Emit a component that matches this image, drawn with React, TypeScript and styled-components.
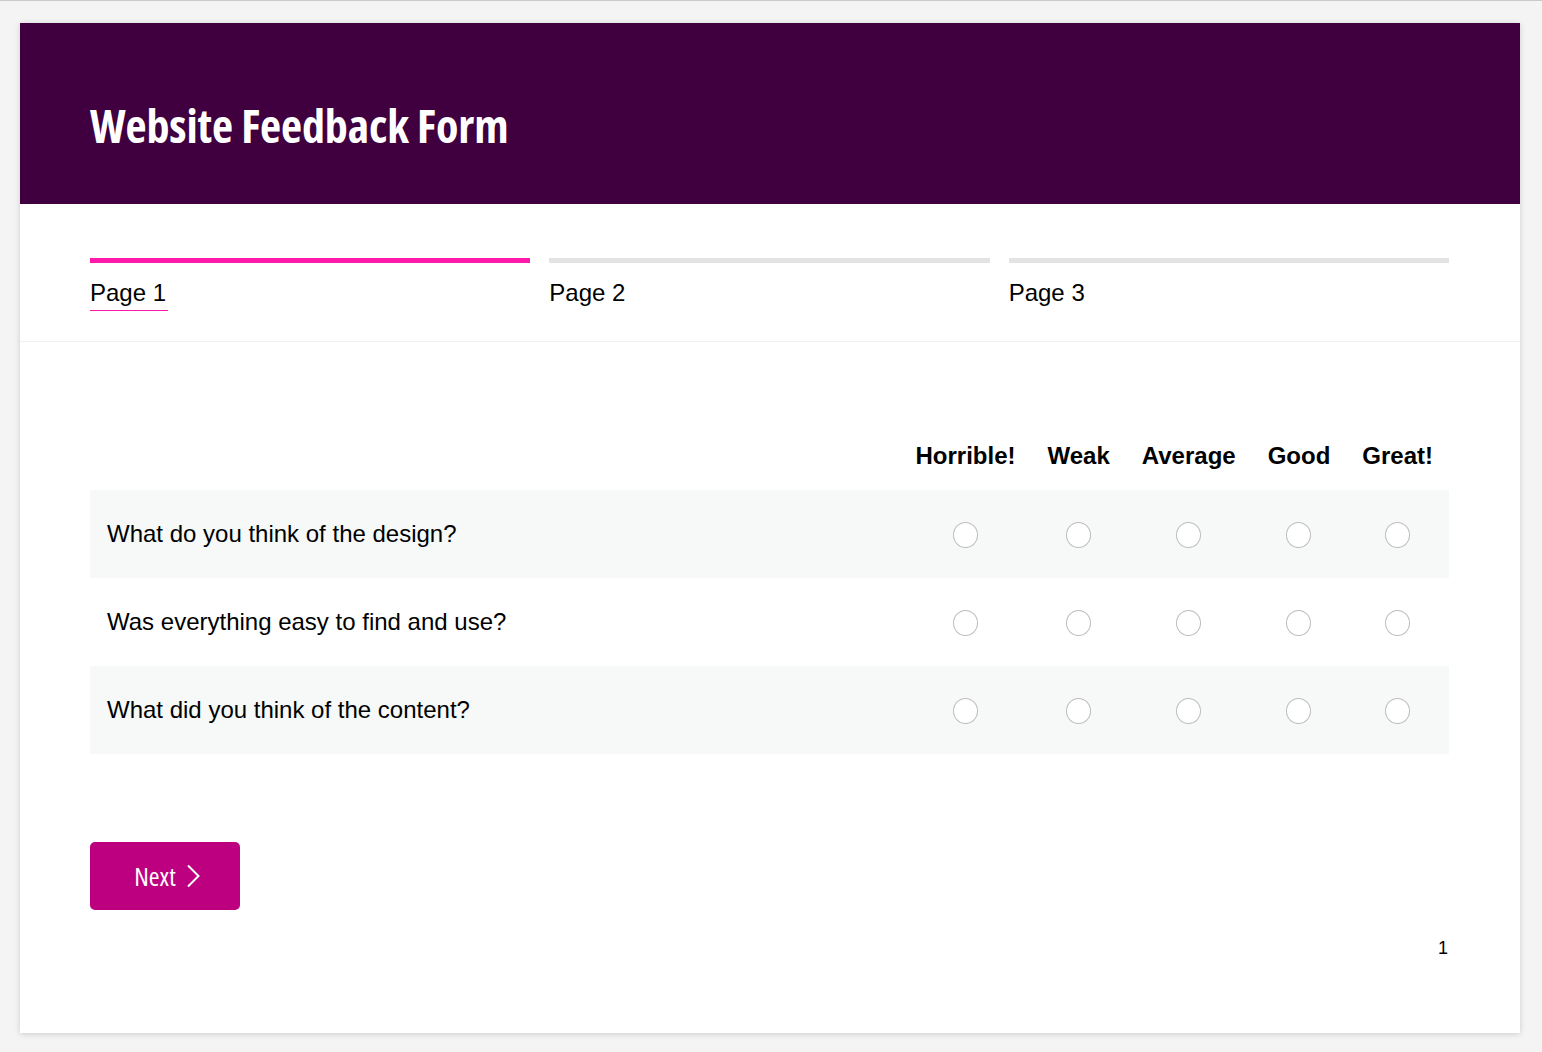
import React from "react";
import styled, { createGlobalStyle } from "styled-components";

const GlobalStyle = createGlobalStyle`
  html, body {
    margin: 0;
    padding: 0;
  }
  body {
    background: #f4f4f4;
    border-top: 1px solid #c9c9c9;
    font-family: "Liberation Sans", Arial, sans-serif;
    color: #000;
  }
`;

const Page = styled.div`
  padding: 22px 22px 19px 20px;
`;

const Card = styled.div`
  background: #fff;
  box-shadow: 0 1px 6px rgba(0, 0, 0, 0.16);
`;

const Header = styled.header`
  box-sizing: border-box;
  height: 181px;
  background: #40003f;
  padding: 71px 70px 0;
`;

const Title = styled.h1`
  margin: 0;
  font-family: "Open Sans", sans-serif;
  font-stretch: 75%;
  font-weight: 700;
  font-size: 46px;
  line-height: 62px;
  color: #fff;
  letter-spacing: -0.1px;
`;

const Steps = styled.nav`
  display: grid;
  grid-template-columns: repeat(3, 1fr);
  column-gap: 19px;
  padding: 54px 71px 30px 70px;
  border-bottom: 1px solid #f0f0f0;
`;

const Step = styled.div`
  display: flex;
  flex-direction: column;
  align-items: flex-start;
`;

const Bar = styled.div<{ $active: boolean }>`
  align-self: stretch;
  height: 5px;
  background: ${(p) => (p.$active ? "#ff19ab" : "#e3e3e3")};
  margin-bottom: 16px;
`;

const StepLabel = styled.span<{ $active: boolean }>`
  font-size: 24px;
  line-height: 28px;
  padding: 0 2px 3px 0;
  border-bottom: 1px solid ${(p) => (p.$active ? "#ff19ab" : "transparent")};
`;

const Body = styled.section`
  padding: 100px 71px 0 70px;
`;

const Matrix = styled.table`
  width: 100%;
  border-collapse: collapse;
`;

const HeadCell = styled.th<{ $wide?: boolean }>`
  width: ${(p) => (p.$wide ? "100%" : "auto")};
  font-size: 24px;
  font-weight: 700;
  line-height: 28px;
  padding: 0 16px 20px;
  white-space: nowrap;
  text-align: center;
`;

const Row = styled.tr<{ $shaded: boolean }>`
  background: ${(p) => (p.$shaded ? "#f7f8f8" : "#fff")};
  height: 88px;
`;

const Question = styled.td`
  font-size: 24px;
  padding: 0 17px;
  text-align: left;
`;

const ChoiceCell = styled.td`
  text-align: center;
  vertical-align: middle;
  padding: 0 16px;
`;

const Radio = styled.span`
  display: inline-block;
  box-sizing: border-box;
  width: 25px;
  height: 26px;
  border: 1.5px solid #bdbdbd;
  border-radius: 50%;
  background: #fff;
  vertical-align: middle;
  margin-top: 2px;
`;

const Footer = styled.div`
  display: flex;
  flex-direction: column;
  padding: 88px 71px 74px 70px;
`;

const NextButton = styled.button`
  align-self: flex-start;
  width: 150px;
  height: 68px;
  border: none;
  border-radius: 5px;
  background: #bc007f;
  color: #fff;
  display: flex;
  align-items: center;
  justify-content: center;
  gap: 10px;
  font-family: "Open Sans", sans-serif;
  font-stretch: 75%;
  font-size: 26px;
  cursor: pointer;
  padding: 0 0 0 4px;
`;

const PageNumber = styled.div`
  align-self: flex-end;
  font-size: 18px;
  margin-top: 28px;
  margin-right: 1px;
`;

const choices = ["Horrible!", "Weak", "Average", "Good", "Great!"];
const questions = [
  "What do you think of the design?",
  "Was everything easy to find and use?",
  "What did you think of the content?",
];
const steps = ["Page 1", "Page 2", "Page 3"];

const App: React.FC = () => {
  return (
    <>
      <GlobalStyle />
      <Page>
        <Card>
          <Header>
            <Title>Website Feedback Form</Title>
          </Header>
          <Steps>
            {steps.map((s, i) => (
              <Step key={s}>
                <Bar $active={i === 0} />
                <StepLabel $active={i === 0}>{s}</StepLabel>
              </Step>
            ))}
          </Steps>
          <Body>
            <Matrix>
              <thead>
                <tr>
                  <HeadCell $wide></HeadCell>
                  {choices.map((c) => (
                    <HeadCell key={c}>{c}</HeadCell>
                  ))}
                </tr>
              </thead>
              <tbody>
                {questions.map((q, i) => (
                  <Row key={q} $shaded={i % 2 === 0}>
                    <Question>{q}</Question>
                    {choices.map((c) => (
                      <ChoiceCell key={c}>
                        <Radio />
                      </ChoiceCell>
                    ))}
                  </Row>
                ))}
              </tbody>
            </Matrix>
          </Body>
          <Footer>
            <NextButton>
              Next
              <svg width="14" height="24" viewBox="0 0 14 24" fill="none">
                <path d="M2 1.5 L12.5 12 L2 22.5" stroke="#fff" strokeWidth="2" />
              </svg>
            </NextButton>
            <PageNumber>1</PageNumber>
          </Footer>
        </Card>
      </Page>
    </>
  );
};

export default App;
